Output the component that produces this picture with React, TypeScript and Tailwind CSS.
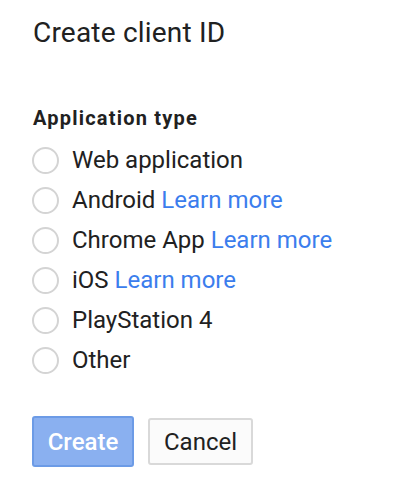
import React from "react";

const items: { label: string; link?: boolean }[] = [
  { label: "Web application" },
  { label: "Android", link: true },
  { label: "Chrome App", link: true },
  { label: "iOS", link: true },
  { label: "PlayStation 4" },
  { label: "Other" },
];

export default function App() {
  return (
    <div
      className="w-[406px] h-[492px] bg-white text-[#212121] pl-[33px] pt-[17px]"
      style={{ fontFamily: "Roboto, 'Liberation Sans', sans-serif" }}
    >
      <h1 className="text-[28px] leading-[32px] font-normal tracking-[0.2px]">Create client ID</h1>
      <h2 className="mt-[57px] text-[20px] leading-[24px] font-bold tracking-[1.2px]">Application type</h2>
      <div className="mt-[10px] flex flex-col">
        {items.map((it) => (
          <label key={it.label} className="flex items-center h-[40px]">
            <span className="w-[27px] h-[27px] rounded-full border-[2px] border-[#d4d4d4] shrink-0 -ml-[1px]" />
            <span className="ml-[13px] text-[24px] leading-[28px]">
              {it.label}
              {it.link && <span className="text-[#3b7ded]"> Learn more</span>}
            </span>
          </label>
        ))}
      </div>
      <div className="mt-[36px] flex items-center gap-[14px] -ml-[1px]">
        <button className="w-[102px] h-[51px] rounded-[3px] bg-[#8ab0f0] border-[2px] border-[#6c9be6] text-white text-[24px] font-medium">
          Create
        </button>
        <button className="w-[105px] h-[47px] rounded-[3px] bg-[#fbfbfb] border-[2px] border-[#d9d9d9] text-[#212121] text-[24px]">
          Cancel
        </button>
      </div>
    </div>
  );
}
